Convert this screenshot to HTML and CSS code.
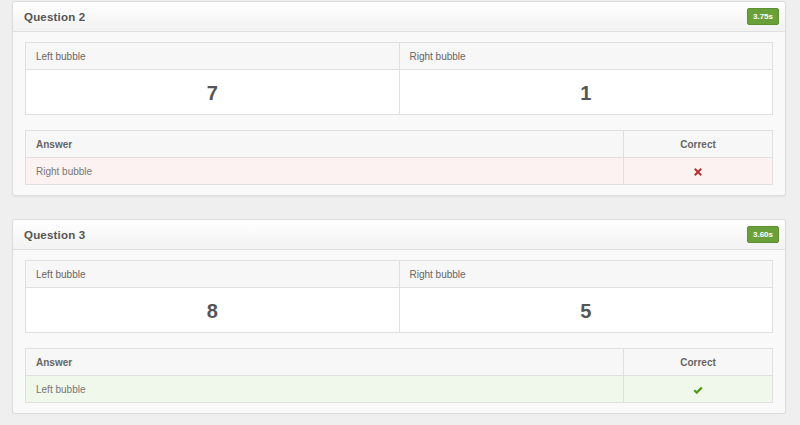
FILE: index.html
```html
<!DOCTYPE html>
<html>
<head>
<meta charset="utf-8">
<link rel="stylesheet" href="styles.css">
</head>
<body>
<div class="page">
  <section class="panel">
    <header class="panel-head">
      <h3 class="panel-title">Question 2</h3>
      <span class="badge">3.75s</span>
    </header>
    <div class="panel-body">
      <table class="bubbles">
        <thead><tr><th>Left bubble</th><th>Right bubble</th></tr></thead>
        <tbody><tr><td>7</td><td>1</td></tr></tbody>
      </table>
      <table class="answers">
        <thead><tr><th class="ans">Answer</th><th class="cor">Correct</th></tr></thead>
        <tbody><tr class="wrong"><td class="ans">Right bubble</td><td class="cor">
          <svg class="icon" width="8" height="8" viewBox="0 0 8 8"><path d="M1.5 1.5 L6.5 6.5 M6.5 1.5 L1.5 6.5" stroke="#b3322f" stroke-width="2" stroke-linecap="square"/></svg>
        </td></tr></tbody>
      </table>
    </div>
  </section>
  <section class="panel">
    <header class="panel-head">
      <h3 class="panel-title">Question 3</h3>
      <span class="badge">3.60s</span>
    </header>
    <div class="panel-body">
      <table class="bubbles">
        <thead><tr><th>Left bubble</th><th>Right bubble</th></tr></thead>
        <tbody><tr><td>8</td><td>5</td></tr></tbody>
      </table>
      <table class="answers">
        <thead><tr><th class="ans">Answer</th><th class="cor">Correct</th></tr></thead>
        <tbody><tr class="right"><td class="ans">Left bubble</td><td class="cor">
          <svg class="icon" width="10" height="8" viewBox="0 0 10 8"><path d="M1.2 4.2 L3.8 6.6 L8.8 1.4" fill="none" stroke="#4c9a14" stroke-width="2.2"/></svg>
        </td></tr></tbody>
      </table>
    </div>
  </section>
</div>
</body>
</html>
```
FILE: styles.css
```css
html, body {
  margin: 0;
  padding: 0;
}
body {
  background: #efefef;
  font-family: "Liberation Sans", Arial, Helvetica, sans-serif;
  color: #555;
}
.page {
  padding: 1px 14px 0 12px;
  display: flex;
  flex-direction: column;
  gap: 23px;
}
.panel {
  background: #f9f9f9;
  border: 1px solid #dcdcdc;
  border-radius: 3px;
  box-shadow: 0 1px 2px rgba(0,0,0,0.06);
}
.panel-head {
  height: 30px;
  box-sizing: border-box;
  display: flex;
  align-items: center;
  justify-content: space-between;
  padding: 0 6px 0 11px;
  background: linear-gradient(#ffffff, #f2f2f2);
  border-bottom: 1px solid #e0e0e0;
  border-radius: 3px 3px 0 0;
}
.panel-title {
  margin: 0;
  font-size: 11.5px;
  font-weight: bold;
  color: #555;
  letter-spacing: 0.2px;
}
.badge {
  display: inline-block;
  background: #6aa03a;
  border: 1px solid #5e8f32;
  color: #fff;
  font-size: 8px;
  font-weight: bold;
  height: 15px;
  line-height: 15px;
  padding: 0 5px;
  border-radius: 2px;
  margin-top: -1px;
}
.panel-body {
  padding: 10px 12px 10px 12px;
  display: flex;
  flex-direction: column;
  gap: 15px;
}
table {
  width: 100%;
  border-collapse: collapse;
  table-layout: fixed;
  border: 1px solid #e0e0e0;
}
th, td {
  border: 1px solid #e0e0e0;
  padding: 0 10px;
  text-align: left;
}
th {
  background: #f7f7f7;
  height: 26px;
  font-size: 10px;
  color: #666;
}
.bubbles th {
  font-weight: normal;
}
.bubbles td {
  background: #fff;
  height: 45px;
  text-align: center;
  font-size: 20px;
  font-weight: bold;
  color: #555;
  padding-top: 2px;
  box-sizing: border-box;
}
.answers th.ans {
  font-weight: bold;
}
.answers .cor {
  width: 128px;
  text-align: center;
}
.answers td {
  height: 26px;
  font-size: 10px;
  color: #777;
}
.wrong td {
  background: #fcf2f1;
}
.right td {
  background: #eff8eb;
}
.icon {
  display: inline-block;
  vertical-align: middle;
}
```
